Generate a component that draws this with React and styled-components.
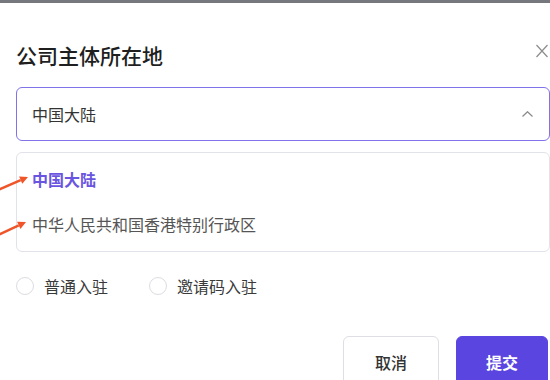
import React, { useState } from "react";
import styled, { createGlobalStyle } from "styled-components";

const GlobalStyle = createGlobalStyle`
  html, body {
    margin: 0;
    padding: 0;
    background: #fff;
    overflow: hidden;
  }
  body {
    font-family: "Noto Sans CJK SC", "Noto Sans", sans-serif;
  }
`;

const Page = styled.div`
  position: relative;
  width: 550px;
  height: 380px;
  overflow: hidden;
`;

const Backdrop = styled.div`
  height: 3px;
  background: #76787d;
`;

const Modal = styled.div`
  padding: 38px 0 0 16px;
  width: 534px;
`;

const Header = styled.div`
  display: flex;
  justify-content: space-between;
  align-items: flex-start;
`;

const Title = styled.h2`
  margin: 0;
  font-size: 21px;
  line-height: 28px;
  font-weight: 500;
  color: #1f1f1f;
`;

const Close = styled.button`
  margin: 3px 2px 0 0;
  padding: 0;
  border: 0;
  background: none;
  width: 12px;
  height: 14px;
  display: flex;
`;

const Select = styled.div`
  margin-top: 18px;
  height: 54px;
  box-sizing: border-box;
  border: 1.5px solid #8072e8;
  border-radius: 6px;
  display: flex;
  align-items: center;
  justify-content: space-between;
  padding: 0 16px 0 15px;
  font-size: 16px;
  color: #333;
`;

const Menu = styled.ul`
  list-style: none;
  margin: 11px 0 0;
  padding: 3px 0 5px;
  border: 1px solid #e2e2ea;
  border-radius: 6px;
`;

const Option = styled.li`
  height: 45px;
  display: flex;
  align-items: center;
  padding-left: 15px;
  font-size: 16px;
  font-weight: ${p => (p.$active ? 700 : 400)};
  color: ${p => (p.$active ? "#6a55e0" : "#555")};
`;

const Radios = styled.div`
  margin-top: 22px;
  height: 24px;
  display: flex;
  align-items: center;
  gap: 41px;
`;

const RadioLabel = styled.label`
  display: flex;
  align-items: center;
  gap: 10px;
  font-size: 16px;
  color: #3a3a3a;
`;

const Circle = styled.span`
  width: 16px;
  height: 16px;
  border-radius: 50%;
  border: 1px solid #dcdce2;
`;

const Footer = styled.div`
  margin-top: 38px;
  display: flex;
  justify-content: flex-end;
  gap: 17px;
  padding-right: 2px;
`;

const Button = styled.button`
  width: ${p => (p.$primary ? "92px" : "96px")};
  height: 52px;
  border-radius: 6px;
  font-family: inherit;
  font-size: 16px;
  font-weight: ${p => (p.$primary ? 700 : 500)};
  border: 1px solid ${p => (p.$primary ? "#5a45e0" : "#dedee4")};
  background: ${p => (p.$primary ? "#5a45e0" : "#fff")};
  color: ${p => (p.$primary ? "#fff" : "#333")};
  padding: 0;
`;

const Annotations = styled.svg`
  position: absolute;
  left: 0;
  top: 0;
  pointer-events: none;
`;

const options = ["中国大陆", "中华人民共和国香港特别行政区"];

function Arrow({ x1, y1, x2, y2 }) {
  const a = Math.atan2(y2 - y1, x2 - x1);
  const len = 8;
  const w = 4;
  const bx = x2 - len * Math.cos(a);
  const by = y2 - len * Math.sin(a);
  const px = -Math.sin(a) * w;
  const py = Math.cos(a) * w;
  return (
    <g>
      <line x1={x1} y1={y1} x2={bx} y2={by} stroke="#f0552a" strokeWidth="2.4" />
      <polygon
        points={`${x2},${y2} ${bx + px},${by + py} ${bx - px},${by - py}`}
        fill="#f0552a"
      />
    </g>
  );
}

export default function App() {
  const [value, setValue] = useState(options[0]);

  return (
    <Page>
      <GlobalStyle />
      <Backdrop />
      <Modal>
        <Header>
          <Title>公司主体所在地</Title>
          <Close aria-label="close">
            <svg width="12" height="14" viewBox="0 0 12 14">
              <path d="M0.5 1 L11.5 13 M11.5 1 L0.5 13" stroke="#8c8c8c" strokeWidth="1.2" fill="none" />
            </svg>
          </Close>
        </Header>
        <Select>
          <span>{value}</span>
          <svg width="11" height="6" viewBox="0 0 11 6">
            <polyline points="0.5,5.5 5.5,0.7 10.5,5.5" stroke="#8a8a8a" strokeWidth="1.2" fill="none" />
          </svg>
        </Select>
        <Menu>
          {options.map(o => (
            <Option key={o} $active={o === value} onClick={() => setValue(o)}>
              {o}
            </Option>
          ))}
        </Menu>
        <Radios>
          <RadioLabel>
            <Circle />
            普通入驻
          </RadioLabel>
          <RadioLabel>
            <Circle />
            邀请码入驻
          </RadioLabel>
        </Radios>
        <Footer>
          <Button>取消</Button>
          <Button $primary>提交</Button>
        </Footer>
      </Modal>
      <Annotations width="60" height="260">
        <Arrow x1={-2} y1={190} x2={28} y2={177} />
        <Arrow x1={-2} y1={235} x2={26} y2={222} />
      </Annotations>
    </Page>
  );
}
